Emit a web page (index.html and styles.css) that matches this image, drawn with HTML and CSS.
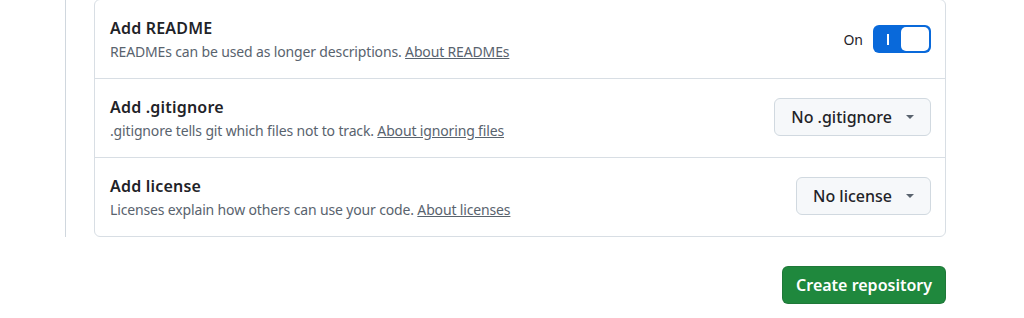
FILE: index.html
```html
<!DOCTYPE html>
<html lang="en">
<head>
<meta charset="UTF-8">
<meta name="viewport" content="width=device-width, initial-scale=1.0">
<title>Create repository</title>
<link rel="stylesheet" href="styles.css">
</head>
<body>
    <div class="page">
        <div class="section">
            <div class="options-card">
                <div class="option-row">
                    <div class="option-text">
                        <h3>Add README</h3>
                        <p>READMEs can be used as longer descriptions. <a href="#">About READMEs</a></p>
                    </div>
                    <div class="toggle-group">
                        <span class="toggle-label">On</span>
                        <button class="toggle" aria-pressed="true">
                            <span class="toggle-bar"></span>
                            <span class="toggle-knob"></span>
                        </button>
                    </div>
                </div>
                <div class="option-row">
                    <div class="option-text">
                        <h3>Add .gitignore</h3>
                        <p>.gitignore tells git which files not to track. <a href="#">About ignoring files</a></p>
                    </div>
                    <button class="select-btn">No .gitignore <span class="caret"></span></button>
                </div>
                <div class="option-row">
                    <div class="option-text">
                        <h3>Add license</h3>
                        <p>Licenses explain how others can use your code. <a href="#">About licenses</a></p>
                    </div>
                    <button class="select-btn">No license <span class="caret"></span></button>
                </div>
            </div>
        </div>
        <div class="actions">
            <button class="create-btn">Create repository</button>
        </div>
    </div>
</body>
</html>
```

FILE: styles.css
```css
body {
    font-family: "Noto Sans", "Segoe UI", sans-serif;
    background-color: #fff;
    color: #1f2328;
    margin: 0;
}
.page {
    width: 881px;
    margin-left: 65px;
}
.section {
    border-left: 1px solid #d0d7de;
    padding-left: 28px;
}
.options-card {
    margin-top: -1px;
    border: 1px solid #d8dee4;
    border-radius: 6px;
}
.option-row {
    display: flex;
    align-items: center;
    justify-content: space-between;
    padding: 16px 14px 16px 15px;
    border-top: 1px solid #d8dee4;
}
.option-row:first-child {
    border-top: none;
}
.option-text h3 {
    margin: 0;
    font-size: 16px;
    font-weight: 600;
    line-height: 24px;
    letter-spacing: 0.2px;
}
.option-text p {
    margin: 2px 0 0;
    font-size: 14px;
    line-height: 20px;
    letter-spacing: -0.15px;
    color: #59636e;
}
.option-text a {
    color: #59636e;
    text-decoration: underline;
}
.toggle-group {
    display: flex;
    align-items: center;
    gap: 10px;
}
.toggle-label {
    font-size: 14px;
    color: #1f2328;
}
.toggle {
    display: flex;
    align-items: center;
    justify-content: space-between;
    width: 58px;
    height: 28px;
    padding: 2px;
    border: none;
    border-radius: 6px;
    background-color: #0969da;
    box-sizing: border-box;
}
.toggle-bar {
    width: 2px;
    height: 11px;
    margin-left: 12px;
    background-color: #fff;
}
.toggle-knob {
    width: 28px;
    height: 24px;
    border-radius: 5px;
    background-color: #fff;
}
.select-btn {
    display: flex;
    align-items: center;
    gap: 14px;
    height: 38px;
    margin-top: -2px;
    padding: 0 16px;
    font-family: inherit;
    font-size: 16px;
    font-weight: 500;
    color: #1f2328;
    background-color: #f6f8fa;
    border: 1px solid #d1d9e0;
    border-radius: 6px;
}
.caret {
    width: 0;
    height: 0;
    border-left: 4px solid transparent;
    border-right: 4px solid transparent;
    border-top: 4px solid #59636e;
}
.actions {
    display: flex;
    justify-content: flex-end;
    margin-top: 29px;
}
.create-btn {
    height: 38px;
    padding: 0 13px;
    font-family: inherit;
    font-size: 16px;
    font-weight: 600;
    color: #fff;
    background-color: #1f883d;
    border: 1px solid rgba(31, 35, 40, 0.15);
    border-radius: 6px;
}
```
